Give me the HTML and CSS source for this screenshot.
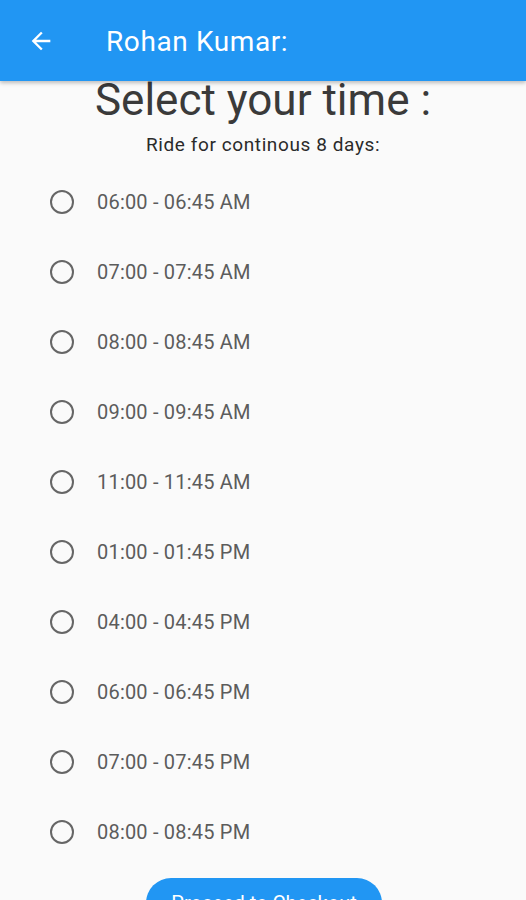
FILE: index.html
```html
<!DOCTYPE html>
<html>
<head>
<meta charset="utf-8">
<link rel="stylesheet" href="styles.css">
</head>
<body>
<header class="appbar">
  <svg class="back" viewBox="0 0 24 24" width="28" height="28"><path d="M20 11H7.83l5.59-5.59L12 4l-8 8 8 8 1.41-1.41L7.83 13H20v-2z" fill="#fff"/></svg>
  <span class="title">Rohan Kumar:</span>
</header>
<main class="content">
  <h1 class="heading">Select your time :</h1>
  <p class="sub">Ride for continous 8 days:</p>
  <ul class="list">
    <li class="row"><span class="radio"></span><span class="label">06:00 - 06:45 AM</span></li>
    <li class="row"><span class="radio"></span><span class="label">07:00 - 07:45 AM</span></li>
    <li class="row"><span class="radio"></span><span class="label">08:00 - 08:45 AM</span></li>
    <li class="row"><span class="radio"></span><span class="label">09:00 - 09:45 AM</span></li>
    <li class="row"><span class="radio"></span><span class="label">11:00 - 11:45 AM</span></li>
    <li class="row"><span class="radio"></span><span class="label">01:00 - 01:45 PM</span></li>
    <li class="row"><span class="radio"></span><span class="label">04:00 - 04:45 PM</span></li>
    <li class="row"><span class="radio"></span><span class="label">06:00 - 06:45 PM</span></li>
    <li class="row"><span class="radio"></span><span class="label">07:00 - 07:45 PM</span></li>
    <li class="row"><span class="radio"></span><span class="label">08:00 - 08:45 PM</span></li>
  </ul>
  <div class="btnwrap"><button class="btn">Proceed to Checkout</button></div>
</main>
</body>
</html>
```
FILE: styles.css
```css
* { box-sizing: border-box; }
html, body { margin: 0; padding: 0; }
body {
  background: #fafafa;
  font-family: Roboto, "Liberation Sans", sans-serif;
  width: 526px;
  height: 900px;
  overflow: hidden;
}
.appbar {
  height: 81px;
  background: #2196f3;
  display: flex;
  align-items: center;
  padding-left: 27px;
  box-shadow: 0 2px 4px rgba(0,0,0,0.25);
  position: relative;
  z-index: 1;
}
.back { display: block; }
.title {
  color: #fff;
  font-size: 28px;
  letter-spacing: 0.6px;
  margin-left: 51px;
  margin-top: 1px;
}
.content { display: flex; flex-direction: column; }
.heading {
  margin: 0;
  font-size: 44px;
  font-weight: 400;
  line-height: 38px;
  color: #3a3a3a;
  text-align: center;
}
.sub {
  margin: 14px 0 0;
  font-size: 19px;
  font-weight: 400;
  letter-spacing: 0.6px;
  line-height: 24px;
  color: #2a2a2a;
  text-align: center;
}
.list {
  list-style: none;
  margin: 0;
  padding: 10px 0 0 0;
}
.row {
  height: 70px;
  display: flex;
  align-items: center;
  padding-left: 50px;
}
.radio {
  width: 24px;
  height: 24px;
  border: 2px solid #666;
  border-radius: 50%;
  flex: none;
}
.label {
  margin-left: 23px;
  font-size: 20px;
  letter-spacing: 0.2px;
  color: #5c5c5c;
}
.btnwrap { display: flex; padding-left: 146px; margin-top: 11px; }
.btn {
  width: 236px;
  height: 50px;
  border: none;
  border-radius: 25px;
  background: #2196f3;
  color: #fff;
  font-family: Roboto, "Liberation Sans", sans-serif;
  font-size: 20px;
  padding: 0;
}
```
